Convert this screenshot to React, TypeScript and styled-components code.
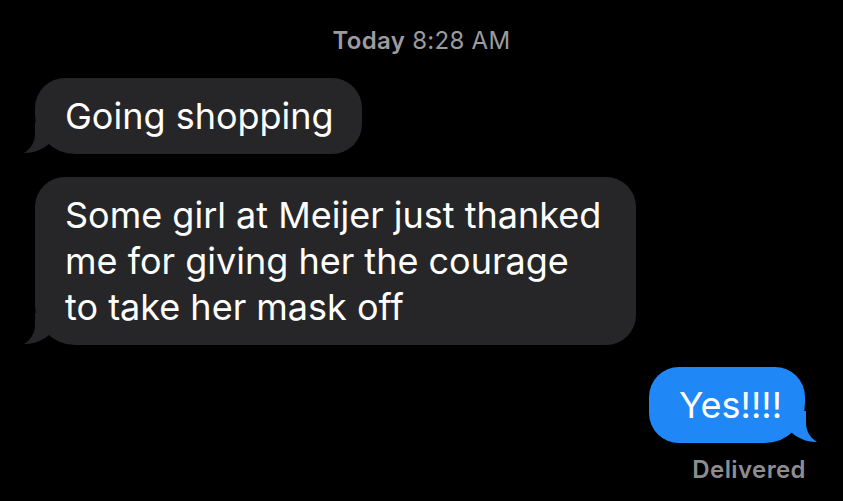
import React from "react";
import styled, { createGlobalStyle } from "styled-components";

const Global = createGlobalStyle`
  html, body { margin: 0; padding: 0; background: #000; }
  body { font-family: Inter, "Liberation Sans", Arial, sans-serif; -webkit-font-smoothing: antialiased; }
`;

const Screen = styled.div`
  width: 843px;
  height: 501px;
  background: #000;
  box-sizing: border-box;
  padding: 25px 38px 0 35px;
  display: flex;
  flex-direction: column;
  overflow: hidden;
`;

const Stamp = styled.div`
  align-self: center;
  margin-left: 3px;
  font-size: 24px;
  line-height: 31px;
  color: #9b9ba0;
  letter-spacing: 0.3px;
  b { font-weight: 600; }
`;

const Row = styled.div<{ $out?: boolean; $gap: number }>`
  display: flex;
  justify-content: ${(p) => (p.$out ? "flex-end" : "flex-start")};
  margin-top: ${(p) => p.$gap}px;
`;

const Bubble = styled.div<{ $out?: boolean; $padRight: number }>`
  position: relative;
  background: ${(p) => (p.$out ? "#1f88f6" : "#262628")};
  color: #fff;
  font-size: 36px;
  line-height: 46px;
  border-radius: 30px;
  ${(p) =>
    p.$out ? "border-bottom-right-radius: 40px;" : "border-bottom-left-radius: 40px;"}
  padding: 15px ${(p) => p.$padRight}px 15px 30px;
`;

const Line = styled.span`
  display: block;
  white-space: nowrap;
`;

const TailSvg = styled.svg<{ $out?: boolean }>`
  position: absolute;
  bottom: 0;
  ${(p) => (p.$out ? "right: -12px; transform: scaleX(-1);" : "left: -11px;")}
  width: 44px;
  height: 32px;
  pointer-events: none;
`;

const Tail = ({ out }: { out?: boolean }) => (
  <TailSvg $out={out} viewBox="0 0 44 32">
    <path
      d="M11 0 L11 12 C11 21 6 27.5 0 31 C9 31.6 19 27.5 26 21 L30 0 Z"
      fill={out ? "#1f88f6" : "#262628"}
    />
  </TailSvg>
);

const Status = styled.div`
  align-self: flex-end;
  margin-top: 12px;
  margin-right: -1px;
  font-size: 24px;
  line-height: 30px;
  font-weight: 600;
  letter-spacing: 0.4px;
  color: #8d8d92;
`;

export default function App() {
  return (
    <>
      <Global />
      <Screen>
        <Stamp>
          <b>Today</b> 8:28 AM
        </Stamp>
        <Row $gap={22}>
          <Bubble $padRight={28}>
            <Line>Going shopping</Line>
            <Tail />
          </Bubble>
        </Row>
        <Row $gap={23}>
          <Bubble $padRight={35}>
            <Line>Some girl at Meijer just thanked</Line>
            <Line>me for giving her the courage</Line>
            <Line>to take her mask off</Line>
            <Tail />
          </Bubble>
        </Row>
        <Row $out $gap={22}>
          <Bubble $out $padRight={23}>
            <Line>Yes!!!!</Line>
            <Tail out />
          </Bubble>
        </Row>
        <Status>Delivered</Status>
      </Screen>
    </>
  );
}
